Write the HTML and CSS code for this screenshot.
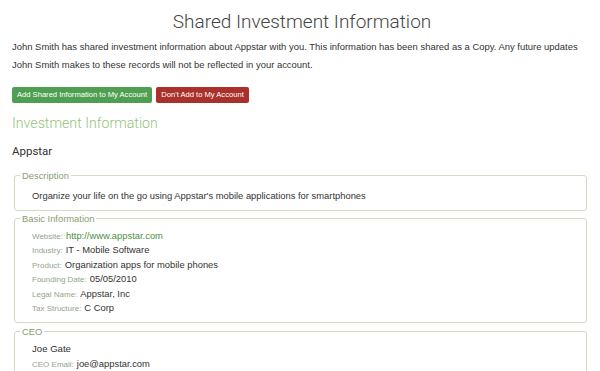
FILE: index.html
```html
<!DOCTYPE html>
<html>
<head>
<meta charset="utf-8">
<link rel="stylesheet" href="styles.css">
</head>
<body>
<div class="page">
  <h1 class="title">Shared Investment Information</h1>
  <p class="intro">John Smith has shared investment information about Appstar with you. This information has been shared as a Copy. Any future updates John Smith makes to these records will not be reflected in your account.</p>
  <div class="actions">
    <button class="btn btn-add">Add Shared Information to My Account</button>
    <button class="btn btn-no">Don't Add to My Account</button>
  </div>
  <h2 class="section">Investment Information</h2>
  <div class="company">Appstar</div>

  <fieldset class="box box-desc">
    <legend>Description</legend>
    <div class="desc">Organize your life on the go using Appstar's mobile applications for smartphones</div>
  </fieldset>

  <fieldset class="box box-basic">
    <legend>Basic Information</legend>
    <div class="row"><span class="label">Website:</span><span class="value link">http://www.appstar.com</span></div>
    <div class="row"><span class="label">Industry:</span><span class="value">IT - Mobile Software</span></div>
    <div class="row"><span class="label">Product:</span><span class="value">Organization apps for mobile phones</span></div>
    <div class="row"><span class="label">Founding Date:</span><span class="value">05/05/2010</span></div>
    <div class="row"><span class="label">Legal Name:</span><span class="value">Appstar, Inc</span></div>
    <div class="row"><span class="label">Tax Structure:</span><span class="value">C Corp</span></div>
  </fieldset>

  <fieldset class="box box-ceo">
    <legend>CEO</legend>
    <div class="row name">Joe Gate</div>
    <div class="row"><span class="label">CEO Email:</span><span class="value">joe@appstar.com</span></div>
  </fieldset>
</div>
</body>
</html>
```

FILE: styles.css
```css
html, body {
  margin: 0;
  padding: 0;
  background: #ffffff;
  overflow: hidden;
}
body {
  font-family: "Liberation Sans", Arial, sans-serif;
  color: #333333;
}
.page {
  padding: 0 8px 0 12px;
}
.title {
  margin: 0;
  padding-top: 10px;
  font-family: Roboto, "Liberation Sans", sans-serif;
  font-weight: 300;
  font-size: 19px;
  line-height: 24px;
  text-align: center;
  color: #444444;
}
.intro {
  margin: 4px 0 0 0;
  font-size: 9.45px;
  line-height: 18px;
  color: #333333;
}
.actions {
  display: flex;
  gap: 4px;
  margin-top: 13px;
}
.btn {
  border: none;
  border-radius: 2px;
  height: 16px;
  padding: 0 4px;
  font-family: "Liberation Sans", Arial, sans-serif;
  font-size: 7.6px;
  color: #ffffff;
  line-height: 16px;
}
.btn-add {
  background: #4f9f52;
  width: 140px;
}
.btn-no {
  background: #a9302b;
  width: 93px;
}
.section {
  margin: 10px 0 0 0;
  font-family: Roboto, "Liberation Sans", sans-serif;
  font-weight: 300;
  font-size: 14.2px;
  line-height: 20px;
  color: #94c47a;
}
.company {
  margin-top: 10px;
  font-family: Roboto, "Liberation Sans", sans-serif;
  font-size: 11.5px;
  line-height: 16px;
  color: #333333;
}
.box {
  margin: 0 5px 0 2px;
  border: 1px solid #d5dac3;
  border-radius: 3px;
  padding: 0 17px;
  min-width: 0;
}
.box legend {
  margin-left: -12px;
  padding: 0 2px;
  font-size: 9.4px;
  line-height: 11px;
  color: #86a070;
}
.box-desc {
  margin-top: 11px;
  padding-top: 8px;
  padding-bottom: 7px;
}
.desc {
  font-size: 9.4px;
  line-height: 14px;
  color: #333333;
}
.box-basic {
  margin-top: 2px;
  padding-top: 5px;
  padding-bottom: 7px;
}
.box-ceo {
  margin-top: 3px;
  padding-top: 5px;
  padding-bottom: 20px;
}
.row {
  display: flex;
  align-items: baseline;
  gap: 3px;
  height: 14.4px;
  font-size: 9.4px;
  line-height: 14.4px;
  white-space: nowrap;
}
.label {
  font-size: 8px;
  color: #93a48a;
}
.value {
  color: #333333;
}
.link {
  color: #4c8f3e;
}
.name {
  font-size: 9.6px;
  color: #333333;
}
```
